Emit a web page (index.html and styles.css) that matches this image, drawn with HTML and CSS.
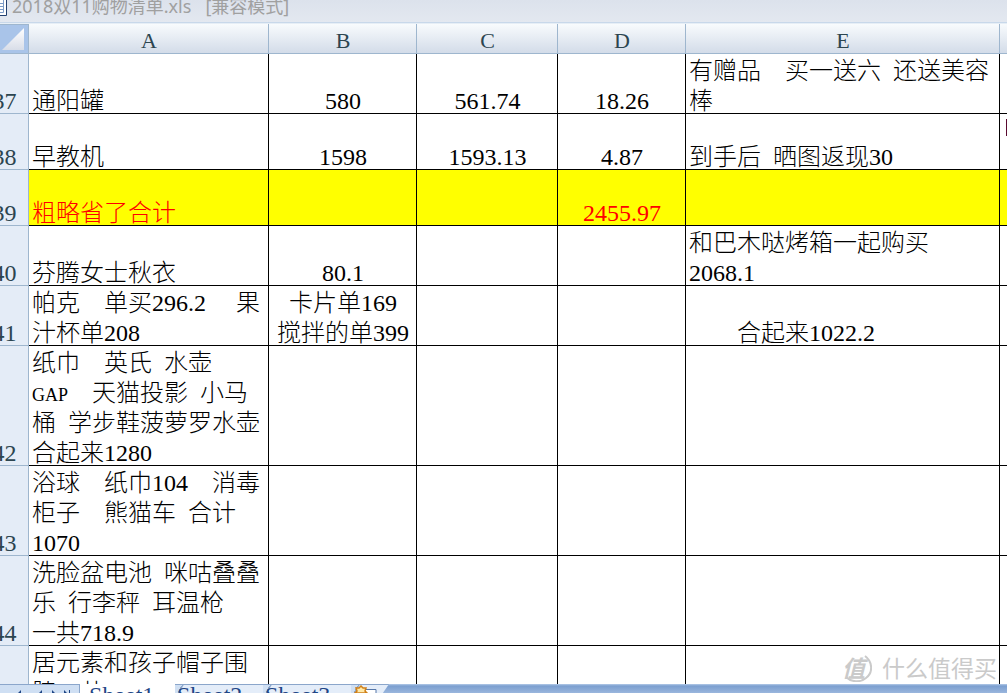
FILE: index.html
```html
<!DOCTYPE html>
<html lang="zh-CN">
<head>
<meta charset="utf-8">
<title>2018双11购物清单.xls</title>
<link rel="stylesheet" href="styles.css">
</head>
<body>
<div class="window">
  <header class="titlebar">
    <svg class="doc-icon" width="8" height="16" viewBox="0 0 8 16" aria-hidden="true"><path d="M0 0h6v15H0z" fill="#fff"/><path d="M6.500 0v15.500H0" fill="none" stroke="#23406f"/><path d="M0 3.500h4M0 6.500h4M3.500 0v12.500H0M0 9.500h4" fill="none" stroke="#7d9cc8"/></svg>
    <h1 class="title">2018双11购物清单.xls&nbsp;&nbsp; [兼容模式]</h1>
  </header>
  <main class="sheet">
    <table class="grid">
      <colgroup><col class="col-head"><col class="col-a"><col class="col-b"><col class="col-c"><col class="col-d"><col class="col-e"><col></colgroup>
      <thead>
        <tr><th class="corner"><svg width="22" height="22" viewBox="0 0 22 22" aria-hidden="true"><defs><linearGradient id="cg" x1="0" y1="0" x2="0" y2="1"><stop offset="0" stop-color="#fff"/><stop offset="1" stop-color="#d8dde8"/></linearGradient></defs><path d="M22 0v22H0z" fill="url(#cg)"/></svg></th><th>A</th><th>B</th><th>C</th><th>D</th><th>E</th><th></th></tr>
      </thead>
      <tbody>
        <tr class="two"><th><p>37</p></th><td><p>通阳罐</p></td><td class="num"><p>580</p></td><td class="num"><p>561.74</p></td><td class="num"><p>18.26</p></td><td><p>有赠品　买一送六&ensp;还送美容<br>棒</p></td><td></td></tr>
        <tr class="short"><th><p>38</p></th><td><p>早教机</p></td><td class="num"><p>1598</p></td><td class="num"><p>1593.13</p></td><td class="num"><p>4.87</p></td><td><p>到手后&ensp;晒图返现30</p></td><td class="clipped"></td></tr>
        <tr class="short total"><th><p>39</p></th><td><p>粗略省了合计</p></td><td></td><td></td><td class="num"><p>2455.97</p></td><td></td><td></td></tr>
        <tr class="two"><th><p>40</p></th><td><p>芬腾女士秋衣</p></td><td class="num"><p>80.1</p></td><td></td><td></td><td><p>和巴木哒烤箱一起购买<br>2068.1</p></td><td></td></tr>
        <tr class="two"><th><p>41</p></th><td><p>帕克　单买296.2　 果<br>汁杯单208</p></td><td class="num"><p>卡片单169<br>搅拌的单399</p></td><td></td><td></td><td><p>　　合起来1022.2</p></td><td></td></tr>
        <tr class="four"><th><p>42</p></th><td><p>纸巾　英氏&ensp;水壶<br><span class="latin">GAP</span>　天猫投影&ensp;小马<br>桶&ensp;学步鞋菠萝罗水壶<br>合起来1280</p></td><td></td><td></td><td></td><td></td><td></td></tr>
        <tr class="three"><th><p>43</p></th><td><p>浴球　纸巾104　消毒<br>柜子　熊猫车&ensp;合计<br>1070</p></td><td></td><td></td><td></td><td></td><td></td></tr>
        <tr class="three"><th><p>44</p></th><td><p>洗脸盆电池&ensp;咪咕叠叠<br>乐&ensp;行李秤&ensp;耳温枪<br>一共718.9</p></td><td></td><td></td><td></td><td></td><td></td></tr>
        <tr class="two"><th></th><td><p>居元素和孩子帽子围<br>脖一共</p></td><td></td><td></td><td></td><td></td><td></td></tr>
      </tbody>
    </table>
    <div class="watermark"><svg width="30" height="30" viewBox="0 0 30 30" aria-hidden="true"><path d="M23 4C31 10 31 21 24 26C18 31 9 30 4 25" fill="none" stroke="#cacaca" stroke-width="2"/></svg><span class="seal">值</span><span>什么值得买</span></div>
  </main>
  <footer class="tabbar">
    <div class="nav"><svg width="79" height="8" viewBox="0 0 79 8" aria-hidden="true"><path d="M17 9l4-4v4zM38 9l4-4v4zM52 9V5l4 4zM64 9V5l4 4zM69 5h1v4h-1z" fill="#1f4686"/></svg></div>
    <button class="tab active">Sheet1</button><button class="tab">Sheet2</button><button class="tab">Sheet3</button>
    <button class="tab add" aria-label="插入工作表"><svg width="26" height="8" viewBox="0 0 26 8" aria-hidden="true"><path d="M10 4.500h13V9H10z" fill="#fff" stroke="#5677a8"/><path d="M2 8l2-2-1-3 3 0 2-2 2 2 3 0-1 3 2 2z" fill="#ffe9a8" stroke="#d08018" stroke-width="1.500"/></svg></button>
  </footer>
</div>
</body>
</html>
```
FILE: styles.css
```css
* { box-sizing: border-box; }
body { margin: 0; }
.window {
  display: flex;
  flex-direction: column;
  height: 100vh;
  overflow: hidden;
  font-family: "Liberation Serif", "Noto Sans CJK SC", serif;
}
.titlebar {
  flex: none;
  display: flex;
  align-items: flex-start;
  gap: 4px;
  height: 24px;
  background: linear-gradient(#dce2ec, #e3e8f0 22px, #c8d8ea 22px, #c8d8ea 23px, #e6eef6 23px);
}
.title {
  margin: 0;
  font: 400 18px/12px "Noto Sans", "Noto Sans CJK SC", sans-serif;
  color: #a0a0a0;
  white-space: nowrap;
}
.sheet { position: relative; flex: 1; min-height: 0; overflow: hidden; background: #fff; }
.grid {
  width: calc(100% + 20px);
  margin-left: -20px;
  table-layout: fixed;
  border-spacing: 0;
  font-size: 24px;
  line-height: 30px;
  white-space: nowrap;
}
.col-head { width: 49px; }
.col-a { width: 240px; }
.col-b { width: 148px; }
.col-c { width: 141px; }
.col-d { width: 128px; }
.col-e { width: 314px; }
.grid th, .grid td { padding: 0 3px; vertical-align: bottom; font-weight: 300; }
.grid td { box-shadow: inset -1px -1px #000; text-align: left; }
.grid p { margin: 0 0 -2px; }
.grid .num { text-align: center; }
.grid thead th {
  height: 30px;
  padding-top: 4px;
  font-size: 22px;
  line-height: 26px;
  color: #2c4550;
  background: linear-gradient(#f8fbfd, #d2dbe8);
  box-shadow: inset -1px -1px #9eb6ce;
}
.grid tbody th { padding: 0; color: #2c4550; background: #e4ecf7; box-shadow: inset -1px -1px #9eb6ce; }
.grid thead .corner { padding: 4px 5px 4px 0; line-height: 0; text-align: right; background: #a9c4e9; box-shadow: inset -1px -1px #9eb6ce, inset 0 1px #9eb6ce; }
.grid td:last-child { box-shadow: inset 0 -1px #000; }
.grid thead th:last-child { box-shadow: inset 0 -1px #9eb6ce; }
.short { height: 56px; }
.two { height: 60px; }
.three { height: 90px; }
.four { height: 120px; }
.latin { font-size: 18px; line-height: 20px; }
.total td { background: #ff0; color: #f00; }
.grid .clipped { background: linear-gradient(#5a0a30, #5a0a30) right 5px / 1px 17px no-repeat; }
.watermark {
  position: absolute;
  right: 10px;
  bottom: 2px;
  display: grid;
  grid-template-columns: 30px auto;
  gap: 10px;
  align-items: center;
  font: 23px/30px "Noto Sans CJK SC", sans-serif;
  color: #cacaca;
}
.watermark svg, .seal { grid-area: 1 / 1; }
.seal { font-weight: 700; font-style: italic; }
.tabbar {
  flex: none;
  display: flex;
  height: 9px;
  overflow: hidden;
  background: linear-gradient(#b5cbe8, #7b9fd0 2px, #9ab6dd);
}
.nav { width: 80px; background: #cfdff3; border: solid #8ba6cb; border-width: 1px 1px 0 0; }
.nav svg, .add svg { display: block; }
.tab {
  width: 88px;
  height: 21px;
  padding: 0 0 0 2px;
  border: 0;
  border-top: 1px solid #8ba6cb;
  background: linear-gradient(120deg, #cfdff3 6px, #8ba6cb 6px, #8ba6cb 7px, #e4edf9 8px);
  font: 24px/20px "Liberation Serif", serif;
  text-align: left;
  color: #1f4686;
}
.tab.active { width: 95px; padding-left: 9px; background: #fff; border-top-color: #fff; }
.tab.add { width: 38px; height: 9px; line-height: 0; clip-path: polygon(0 0, 100% 0, 84% 100%, 0 100%); }
```
